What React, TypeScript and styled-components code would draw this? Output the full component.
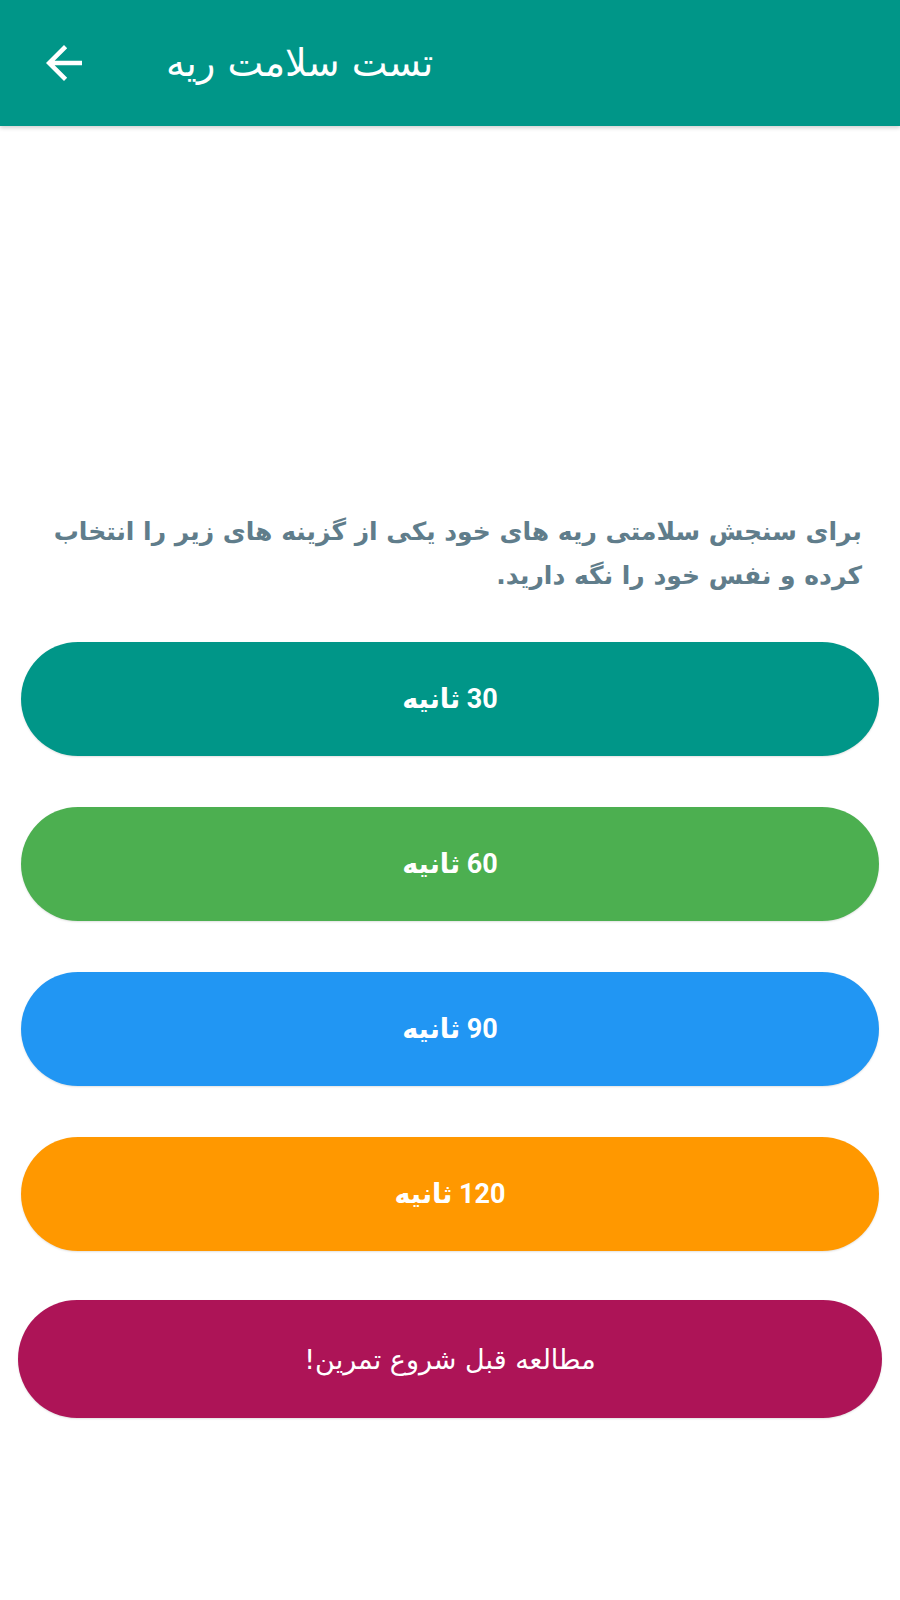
import React from "react";
import styled, { createGlobalStyle } from "styled-components";

const Global = createGlobalStyle`
  html, body { margin: 0; padding: 0; background: #ffffff; }
  body { font-family: Roboto, "DejaVu Sans", sans-serif; }
`;

const Page = styled.div`
  width: 900px;
  min-height: 1600px;
  background: #ffffff;
  display: flex;
  flex-direction: column;
`;

const AppBar = styled.header`
  height: 126px;
  background: #009688;
  display: flex;
  align-items: center;
  box-shadow: 0 2px 4px rgba(0, 0, 0, 0.18);
  position: relative;
  z-index: 1;
`;

const BackButton = styled.button`
  width: 54px;
  height: 54px;
  margin-left: 37px;
  padding: 0;
  border: none;
  background: transparent;
  display: flex;
  align-items: center;
  justify-content: center;
`;

const Title = styled.h1`
  margin: 0 0 0 75px;
  font-family: "DejaVu Sans", Roboto, sans-serif;
  font-weight: 400;
  font-size: 38px;
  color: #ffffff;
  direction: rtl;
`;

const Content = styled.main`
  display: flex;
  flex-direction: column;
  padding: 384px 18px 0 18px;
`;

const Intro = styled.p`
  margin: 0 20px 44px 28px;
  direction: rtl;
  text-align: right;
  font-family: "DejaVu Sans", Roboto, sans-serif;
  font-weight: 700;
  font-size: 25px;
  line-height: 44px;
  color: #607d8b;
`;

const Options = styled.div`
  display: flex;
  flex-direction: column;
  gap: 51px;
  padding: 0 3px;
`;

const Pill = styled.button<{ $bg: string }>`
  height: 114px;
  width: 100%;
  border: none;
  border-radius: 57px;
  background: ${(p) => p.$bg};
  color: #ffffff;
  direction: rtl;
  font-family: Roboto, "DejaVu Sans", sans-serif;
  font-weight: 700;
  font-size: 27px;
  display: flex;
  align-items: center;
  justify-content: center;
  box-shadow: 0 1px 2px rgba(0, 0, 0, 0.12);
`;

const StudyButton = styled.button`
  margin-top: 49px;
  height: 118px;
  width: 100%;
  border: none;
  border-radius: 59px;
  background: #ad1457;
  color: #ffffff;
  direction: rtl;
  font-family: "DejaVu Sans", Roboto, sans-serif;
  font-weight: 400;
  font-size: 27px;
  box-shadow: 0 1px 2px rgba(0, 0, 0, 0.12);
`;

const options = [
  { sec: "30", color: "#009688" },
  { sec: "60", color: "#4caf50" },
  { sec: "90", color: "#2196f3" },
  { sec: "120", color: "#ff9800" },
];

export default function App() {
  return (
    <Page>
      <Global />
      <AppBar>
        <BackButton aria-label="back">
          <svg width="54" height="54" viewBox="0 0 24 24" fill="#ffffff">
            <path d="M20 11H7.83l5.59-5.59L12 4l-8 8 8 8 1.41-1.41L7.83 13H20v-2z" />
          </svg>
        </BackButton>
        <Title>تست سلامت ریه</Title>
      </AppBar>
      <Content>
        <Intro>
          برای سنجش سلامتی ریه های خود یکی از گزینه های زیر را انتخاب کرده و نفس خود را نگه دارید.
        </Intro>
        <Options>
          {options.map((o) => (
            <Pill key={o.sec} $bg={o.color}>
              {o.sec} ثانیه
            </Pill>
          ))}
        </Options>
        <StudyButton>مطالعه قبل شروع تمرین!</StudyButton>
      </Content>
    </Page>
  );
}
